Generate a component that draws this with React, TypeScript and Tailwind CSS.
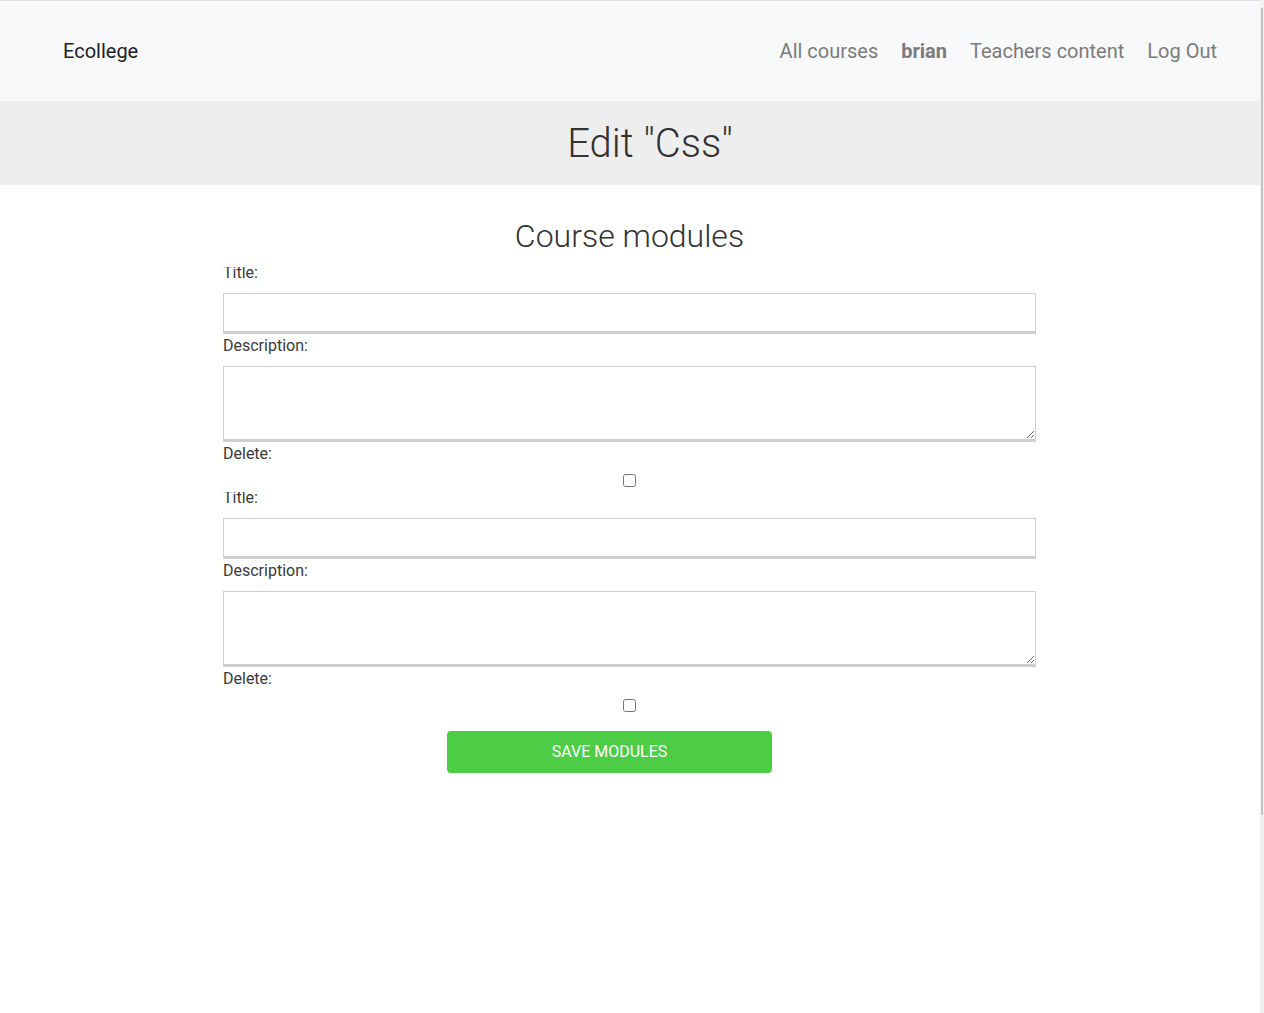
import React from 'react';

const modules = [1, 2];

const TitleLabel: React.FC = () => (
  // top of the label is hidden under the block above, like in the original page
  <div className="mt-[6px] mb-[8px] h-[18px] overflow-hidden flex items-end">
    <label className="block leading-[24px] text-[16px] text-[#3a3a3a]">Title:</label>
  </div>
);

const ModuleFields: React.FC = () => (
  <div>
    <TitleLabel />
    <input
      type="text"
      className="block w-full h-[41px] bg-white border border-[#cfcfcf] border-b-[3px] outline-none px-2"
    />
    <label className="block leading-[24px] text-[16px] text-[#3a3a3a] mb-[8px]">Description:</label>
    <textarea className="block w-full h-[76px] bg-white border border-[#cfcfcf] border-b-[3px] outline-none px-2" />
    <label className="block leading-[24px] text-[16px] text-[#3a3a3a] mb-[8px]">Delete:</label>
    <div className="flex justify-center h-[12px]">
      <input type="checkbox" className="m-0 w-[13px] h-[13px]" />
    </div>
  </div>
);

const App: React.FC = () => {
  return (
    <div className="flex w-[1264px] min-h-[1013px] bg-white" style={{ fontFamily: 'Roboto, "Noto Sans", sans-serif' }}>
      <div className="w-[1260px] flex flex-col">
        {/* Navbar */}
        <nav className="h-[101px] border-t border-[#dcdfe3] bg-[#f8f9fa] flex items-center justify-between pl-[63px] pr-[43px]">
          <span className="text-[20px] text-[#222]">Ecollege</span>
          <div className="flex items-center gap-[23px] text-[20px] text-[#7b7b7b]">
            <a>All courses</a>
            <a className="font-bold">brian</a>
            <a>Teachers content</a>
            <a>Log Out</a>
          </div>
        </nav>

        {/* Page header */}
        <div className="bg-[#eeeeee] pt-[19px] pb-[17px]">
          <h1 className="text-center pl-[40px] text-[40px] leading-[48px] font-light text-[#333]">Edit "Css"</h1>
        </div>

        {/* Modules form */}
        <div className="w-[813px] ml-[223px]">
          <h2 className="mt-[33px] mb-[13px] text-center text-[32px] leading-[36px] font-light text-[#333]">
            Course modules
          </h2>
          {modules.map(m => (
            <ModuleFields key={m} />
          ))}
          <button className="mt-[20px] ml-[224px] w-[325px] h-[42px] rounded-[4px] bg-[#4ccd45] text-white text-[16px] font-normal uppercase">
            Save modules
          </button>
        </div>
      </div>

      {/* Scrollbar */}
      <div className="w-[4px] bg-[#f1f1f1] pt-[8px]">
        <div className="ml-[1px] w-[2px] h-[807px] bg-[#c1c1c1]" />
      </div>
    </div>
  );
};

export default App;
